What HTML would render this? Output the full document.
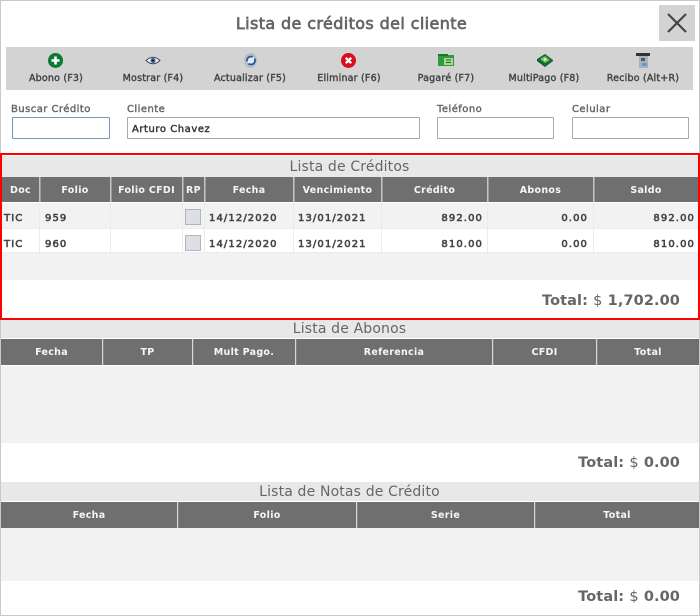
<!DOCTYPE html>
<html lang="es"><head><meta charset="utf-8"><title>Lista de créditos del cliente</title>
<style>
html,body{margin:0;padding:0;background:#fff}
#p{position:relative;width:700px;height:616px;overflow:hidden;background:#fff;font-family:"DejaVu Sans","Liberation Sans",sans-serif}
.b{position:absolute}
.t{position:absolute;white-space:nowrap;text-align:center;line-height:14px;height:14px}
.tb{font-size:9.5px;color:#444;font-weight:400;-webkit-text-stroke:.4px #444;letter-spacing:.2px}
.lb{font-size:10px;color:#666;text-align:left;letter-spacing:.45px;-webkit-text-stroke:.4px #666}
.h{font-size:9.5px;font-weight:700;color:#f6f6f6;letter-spacing:.3px}
.d{font-size:10px;font-weight:400;color:#444;letter-spacing:1.1px;-webkit-text-stroke:.6px #444}
.st{font-size:14px;color:#666;letter-spacing:.15px}
.tot{font-size:14.5px;font-weight:700;color:#666;text-align:right;line-height:18px;height:18px;letter-spacing:.1px}
.tot span{font-weight:400}
.in{position:absolute;box-sizing:border-box;background:#fff;border:1px solid #a9a9a9;border-radius:1px}
</style></head><body><div id="p">
<div class="b" style="left:0;top:0;width:698px;height:614px;border:1px solid #c9c9c9"></div>

<div class="t" style="left:0;width:703px;top:15px;height:18px;line-height:18px;font-size:16px;font-weight:400;color:#666;-webkit-text-stroke:.7px #666;letter-spacing:.38px">Lista de créditos del cliente</div>
<div class="b" style="left:659px;top:5px;width:36px;height:36px;background:#d3d3d3"><svg width="36" height="36"><path d="M9 9L27 27M27 9L9 27" stroke="#444" stroke-width="2.2" fill="none"/></svg></div>

<div class="b" style="left:6px;top:47px;width:687px;height:43px;background:#d3d3d3"></div>
<svg class="b" style="left:48px;top:53px" width="15" height="15"><circle cx="7.5" cy="7.5" r="7.5" fill="#0a7a30"/><path d="M7.5 3.5v8M3.5 7.5h8" stroke="#fff" stroke-width="2.6"/></svg>
<svg class="b" style="left:145px;top:55px" width="16" height="11"><path d="M1 5.5Q8-1 15 5.500Q8 12 1 5.500Z" fill="#eef" stroke="#444" stroke-width="1"/><circle cx="8" cy="5.500" r="2.500" fill="#2a5fa8"/><circle cx="8" cy="5.500" r="1" fill="#123"/></svg>
<svg class="b" style="left:243px;top:53px" width="15" height="15"><ellipse cx="7.500" cy="7.500" rx="6.500" ry="7.500" fill="#b5bcc6"/><circle cx="8" cy="7.500" r="4" fill="#e8ecf0" stroke="#1c56a8" stroke-width="1.800" stroke-dasharray="9 2.500"/></svg>
<svg class="b" style="left:341px;top:53px" width="15" height="15"><circle cx="7.500" cy="7.500" r="7.500" fill="#d8101c"/><path d="M4.800 4.800l5.400 5.400M10.200 4.800l-5.400 5.400" stroke="#fff" stroke-width="2.400"/></svg>
<svg class="b" style="left:438px;top:54px" width="16" height="12"><rect width="16" height="11" y="1" fill="#2f9a3a"/><rect width="10" height="2" x="0" y="0" fill="#167a28"/><rect x="6" y="4" width="9" height="7" fill="#a5d890"/><path d="M8 6h5M8 8.500h5" stroke="#1a6a2a"/></svg>
<svg class="b" style="left:537px;top:53px" width="16" height="14"><path d="M0 6L8 1L16 7L8 13Z" fill="#0e6a3c"/><path d="M3 6L8 3L13 7L8 10Z" fill="#6fc04a"/><circle cx="8" cy="6.500" r="1.500" fill="#e0f0b0"/><path d="M0 6v2l8 6 8-6V7l-8 6z" fill="#0a4a2a"/></svg>
<svg class="b" style="left:636px;top:53px" width="14" height="15"><rect x="0" y="0" width="14" height="3" fill="#333"/><rect x="3" y="3" width="9" height="12" fill="#a9b2bc"/><rect x="5" y="5" width="4" height="3" fill="#556"/><rect x="6" y="10" width="5" height="3" fill="#5a9ad8"/></svg>

<div class="t tb" style="left:6px;width:100px;top:72px">Abono (F3)</div>
<div class="t tb" style="left:103px;width:100px;top:72px">Mostrar (F4)</div>
<div class="t tb" style="left:200px;width:100px;top:72px">Actualizar (F5)</div>
<div class="t tb" style="left:299px;width:100px;top:72px">Eliminar (F6)</div>
<div class="t tb" style="left:396px;width:100px;top:72px">Pagaré (F7)</div>
<div class="t tb" style="left:494px;width:100px;top:72px">MultiPago (F8)</div>
<div class="t tb" style="left:593px;width:100px;top:72px">Recibo (Alt+R)</div>

<div class="t lb" style="left:11px;top:103px">Buscar Crédito</div>
<div class="t lb" style="left:127px;top:103px">Cliente</div>
<div class="t lb" style="left:437px;top:103px">Teléfono</div>
<div class="t lb" style="left:572px;top:103px">Celular</div>
<div class="in" style="left:12px;top:117px;width:98px;height:22px;border-color:#6f9ac4"></div>
<div class="in" style="left:127px;top:117px;width:293px;height:22px"></div>
<div class="in" style="left:437px;top:117px;width:117px;height:22px"></div>
<div class="in" style="left:572px;top:117px;width:117px;height:22px"></div>
<div class="t" style="left:132px;top:123px;font-size:10px;color:#333;letter-spacing:.55px;-webkit-text-stroke:.4px #333">Arturo Chavez</div>

<!-- Creditos -->
<div class="b" style="left:2px;top:156px;width:696px;height:21px;background:#e8e8e8"></div>
<div class="b" style="left:2px;top:177px;width:696px;height:25px;background:#6f6f6f"></div>
<div class="b" style="left:2px;top:203px;width:696px;height:25px;background:#f2f2f2"></div>
<div class="b" style="left:2px;top:253px;width:696px;height:27px;background:#f2f2f2"></div>
<div class="b" style="left:2px;top:228px;width:696px;height:1px;background:#ececec"></div>
<div class="b" style="left:2px;top:252px;width:696px;height:1px;background:#ececec"></div>
<svg class="b" style="left:0;top:177px" width="700" height="76"><g fill="#c6c6c6"><rect x="39" width="1.500" height="25"/><rect x="110" width="1.500" height="25"/><rect x="182" width="1.500" height="25"/><rect x="204" width="1.500" height="25"/><rect x="293" width="1.500" height="25"/><rect x="381" width="1.500" height="25"/><rect x="487" width="1.500" height="25"/><rect x="593" width="1.500" height="25"/></g><g fill="#ebebeb"><rect x="39" y="26" width="1" height="50"/><rect x="110" y="26" width="1" height="50"/><rect x="182" y="26" width="1" height="50"/><rect x="204" y="26" width="1" height="50"/><rect x="293" y="26" width="1" height="50"/><rect x="381" y="26" width="1" height="50"/><rect x="487" y="26" width="1" height="50"/><rect x="593" y="26" width="1" height="50"/></g></svg>
<div class="b" style="left:0;top:153px;width:696px;height:163px;border:2px solid #f00"></div>
<div class="t st" style="left:0;width:699px;top:160px">Lista de Créditos</div>
<div class="t h" style="left:2px;width:37px;top:184px">Doc</div>
<div class="t h" style="left:40px;width:70px;top:184px">Folio</div>
<div class="t h" style="left:111px;width:71px;top:184px">Folio CFDI</div>
<div class="t h" style="left:183px;width:21px;top:184px">RP</div>
<div class="t h" style="left:205px;width:88px;top:184px">Fecha</div>
<div class="t h" style="left:294px;width:87px;top:184px">Vencimiento</div>
<div class="t h" style="left:382px;width:105px;top:184px">Crédito</div>
<div class="t h" style="left:488px;width:105px;top:184px">Abonos</div>
<div class="t h" style="left:594px;width:104px;top:184px">Saldo</div>

<div class="t d" style="left:4px;top:212px">TIC</div>
<div class="t d" style="left:45px;top:212px">959</div>
<div class="b" style="left:185px;top:209px;width:14px;height:14px;background:#dcdfe6;border:1px solid #b5b5b5"></div>
<div class="t d" style="left:209px;top:212px">14/12/2020</div>
<div class="t d" style="left:298px;top:212px">13/01/2021</div>
<div class="t d" style="right:217px;top:212px">892.00</div>
<div class="t d" style="right:112px;top:212px">0.00</div>
<div class="t d" style="right:5px;top:212px">892.00</div>

<div class="t d" style="left:4px;top:238px">TIC</div>
<div class="t d" style="left:45px;top:238px">960</div>
<div class="b" style="left:185px;top:235px;width:14px;height:14px;background:#dcdfe6;border:1px solid #b5b5b5"></div>
<div class="t d" style="left:209px;top:238px">14/12/2020</div>
<div class="t d" style="left:298px;top:238px">13/01/2021</div>
<div class="t d" style="right:217px;top:238px">810.00</div>
<div class="t d" style="right:112px;top:238px">0.00</div>
<div class="t d" style="right:5px;top:238px">810.00</div>
<div class="t tot" style="right:20px;top:292px">Total: <span>$</span> 1,702.00</div>

<!-- Abonos -->
<div class="b" style="left:1px;top:320px;width:698px;height:18px;background:#e8e8e8"></div>
<div class="b" style="left:1px;top:339px;width:698px;height:26px;background:#6f6f6f"></div>
<div class="b" style="left:1px;top:366px;width:698px;height:77px;background:#f2f2f2"></div>
<svg class="b" style="left:0;top:339px" width="700" height="26"><g fill="#d8d8d8"><rect x="102" width="1.200" height="26"/><rect x="192" width="1.200" height="26"/><rect x="295" width="1.200" height="26"/><rect x="492" width="1.200" height="26"/><rect x="596" width="1.200" height="26"/></g></svg>
<div class="t st" style="left:0;width:699px;top:322px">Lista de Abonos</div>
<div class="t h" style="left:1px;width:101px;top:346px">Fecha</div>
<div class="t h" style="left:103px;width:89px;top:346px">TP</div>
<div class="t h" style="left:193px;width:102px;top:346px">Mult Pago.</div>
<div class="t h" style="left:296px;width:196px;top:346px">Referencia</div>
<div class="t h" style="left:493px;width:103px;top:346px">CFDI</div>
<div class="t h" style="left:597px;width:102px;top:346px">Total</div>
<div class="t tot" style="right:20px;top:454px">Total: <span>$</span> 0.00</div>

<!-- Notas -->
<div class="b" style="left:1px;top:482px;width:698px;height:19px;background:#e8e8e8"></div>
<div class="b" style="left:1px;top:502px;width:698px;height:26px;background:#6f6f6f"></div>
<div class="b" style="left:1px;top:528px;width:698px;height:53px;background:#f2f2f2"></div>
<svg class="b" style="left:0;top:502px" width="700" height="26"><g fill="#d8d8d8"><rect x="177" width="1.200" height="26"/><rect x="356" width="1.200" height="26"/><rect x="534" width="1.200" height="26"/></g></svg>
<div class="t st" style="left:0;width:699px;top:485px">Lista de Notas de Crédito</div>
<div class="t h" style="left:1px;width:176px;top:509px">Fecha</div>
<div class="t h" style="left:178px;width:178px;top:509px">Folio</div>
<div class="t h" style="left:357px;width:177px;top:509px">Serie</div>
<div class="t h" style="left:535px;width:164px;top:509px">Total</div>
<div class="t tot" style="right:20px;top:588px">Total: <span>$</span> 0.00</div>
</div></body></html>
